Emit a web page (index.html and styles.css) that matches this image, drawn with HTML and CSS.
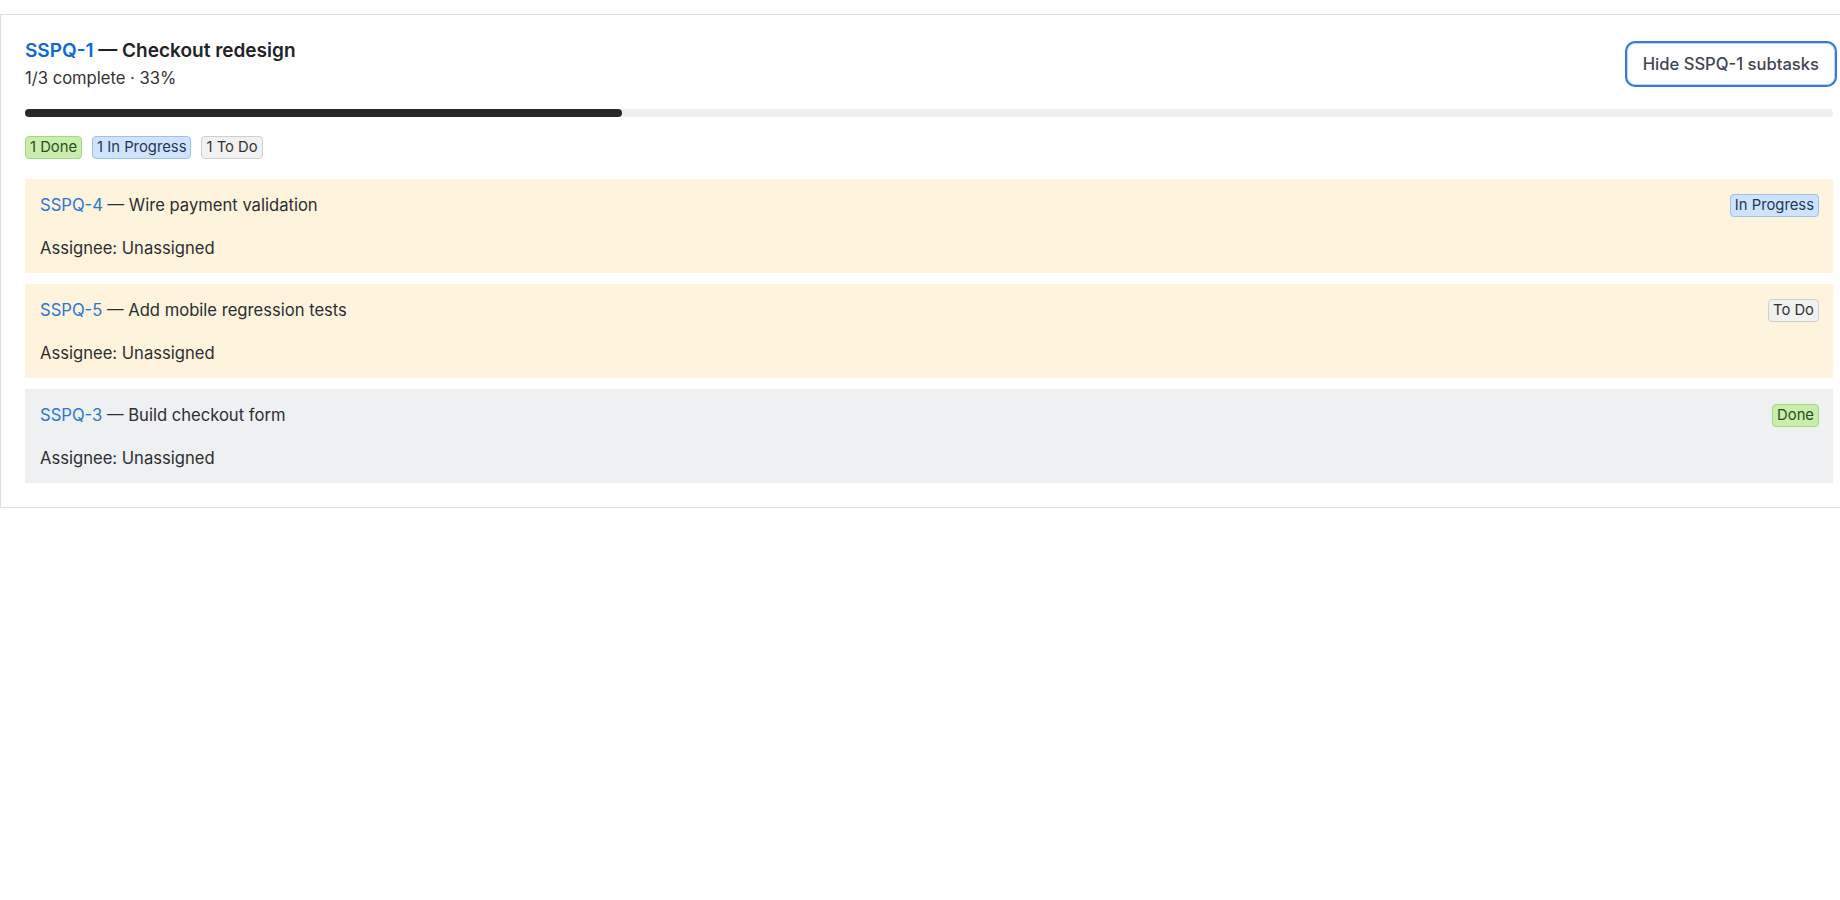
FILE: index.html
```html
<!DOCTYPE html>
<html>

<head>
    <meta charset="utf-8">
    <link rel="stylesheet" href="styles.css">
</head>

<body>
    <div class="epic-card">
        <div class="epic-header">
            <div class="epic-info">
                <div class="epic-title"><a class="issue-key" href="#">SSPQ-1</a> — Checkout redesign</div>
                <div class="epic-meta">1/3 complete · 33%</div>
            </div>
            <button class="toggle-btn">Hide SSPQ-1 subtasks</button>
        </div>

        <div class="progress">
            <div class="progress-fill" style="width: 33%;"></div>
        </div>

        <div class="counts">
            <span class="badge done">1 Done</span>
            <span class="badge in-progress">1 In Progress</span>
            <span class="badge todo">1 To Do</span>
        </div>

        <div class="subtasks">
            <div class="subtask open">
                <div class="subtask-top">
                    <div class="subtask-title"><a class="subtask-key" href="#">SSPQ-4</a> — Wire payment validation</div>
                    <span class="badge in-progress">In Progress</span>
                </div>
                <div class="subtask-assignee">Assignee: Unassigned</div>
            </div>
            <div class="subtask open">
                <div class="subtask-top">
                    <div class="subtask-title"><a class="subtask-key" href="#">SSPQ-5</a> — Add mobile regression tests</div>
                    <span class="badge todo">To Do</span>
                </div>
                <div class="subtask-assignee">Assignee: Unassigned</div>
            </div>
            <div class="subtask closed">
                <div class="subtask-top">
                    <div class="subtask-title"><a class="subtask-key" href="#">SSPQ-3</a> — Build checkout form</div>
                    <span class="badge done">Done</span>
                </div>
                <div class="subtask-assignee">Assignee: Unassigned</div>
            </div>
        </div>
    </div>
</body>

</html>
```

FILE: styles.css
```css
html,
body {
    overflow: hidden;
}

body {
    margin: 0;
    font-family: Inter, 'Noto Sans', sans-serif;
    color: #2b2f33;
    background: white;
}

a {
    text-decoration: none;
}

.epic-card {
    margin: 14px -18px 0 0;
    padding: 24px;
    border: 1px solid #dedede;
    background: white;
}

.epic-header {
    display: flex;
    justify-content: space-between;
    align-items: center;
}

.epic-title {
    font-size: 19px;
    font-weight: 600;
    color: #1f2328;
}

.issue-key {
    color: #0b68d8;
}

.epic-meta {
    margin-top: 6px;
    font-size: 16.6px;
    color: #333;
}

.toggle-btn {
    font-family: inherit;
    font-size: 16.6px;
    font-weight: 500;
    color: #3f4650;
    background: white;
    border: 1px solid #c9d3de;
    border-radius: 8px;
    height: 42px;
    margin-right: -2px;
    padding: 0 15px;
    box-shadow: 0 0 0 2px #2f7be0;
    cursor: pointer;
}

.progress {
    margin-top: 21px;
    height: 8px;
    background: #efefef;
    border-radius: 4px;
}

.progress-fill {
    height: 100%;
    background: #26282c;
    border-radius: 4px;
}

.counts {
    display: flex;
    gap: 10px;
    margin-top: 19px;
}

.badge {
    display: inline-block;
    font-size: 14.8px;
    line-height: 21px;
    padding: 0 4px;
    border: 1px solid;
    border-radius: 4px;
    white-space: nowrap;
}

.badge.done {
    background: #c9eeab;
    border-color: #a6d884;
    color: #2b4d1f;
}

.badge.in-progress {
    background: #cfe3ff;
    border-color: #9fc1ec;
    color: #1e3757;
}

.badge.todo {
    background: #f1f1f1;
    border-color: #cfcfcf;
    color: #333;
}

.subtasks {
    display: flex;
    flex-direction: column;
    gap: 11px;
    margin-top: 20px;
}

.subtask {
    padding: 14px 14px 12px 15px;
    font-size: 16.6px;
    line-height: 25px;
}

.subtask.open {
    background: #fef3dc;
}

.subtask.closed {
    background: #eff0f2;
}

.subtask-top {
    display: flex;
    justify-content: space-between;
    align-items: center;
}

.subtask-title {
    color: #2b2f33;
}

.subtask-key {
    color: #2a78d2;
}

.subtask-assignee {
    margin-top: 18px;
    color: #2b2f33;
}
```
